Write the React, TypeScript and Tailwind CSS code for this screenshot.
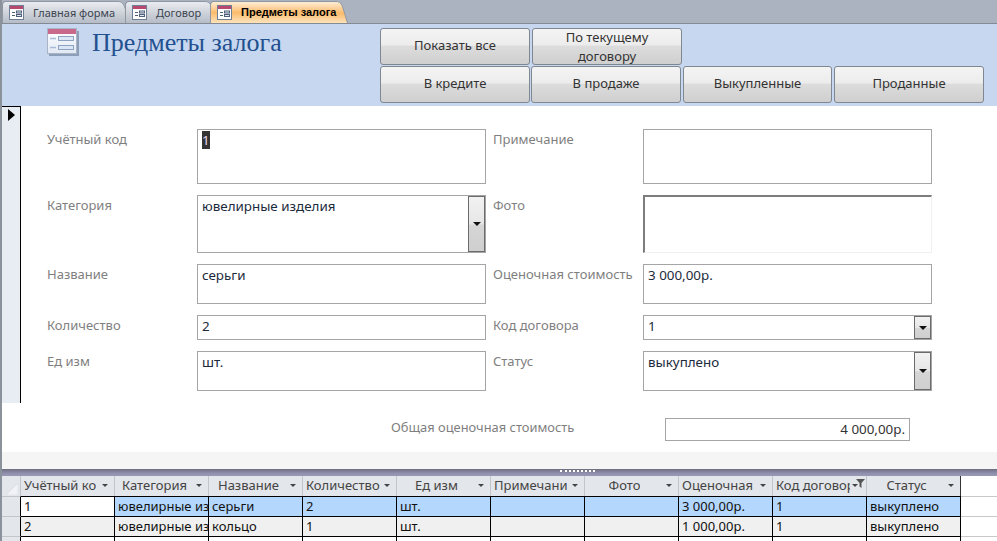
import React from "react";

const FormIcon = () => (
  <svg width="15" height="15" viewBox="0 0 15 15" className="shrink-0">
    <rect x="0.5" y="0.5" width="14" height="14" fill="#fff" stroke="#6f7f95" />
    <rect x="1" y="1" width="13" height="3" fill="#b8486e" />
    <path d="M3 7.5h3M3 10.5h3" stroke="#4f6078" />
    <rect x="7.5" y="6" width="5" height="2" fill="#dfe8f5" stroke="#4f6078" />
    <rect x="7.5" y="9.5" width="5" height="2" fill="#dfe8f5" stroke="#4f6078" />
  </svg>
);

const BigIcon = () => (
  <svg width="32" height="28" viewBox="0 0 32 28" className="shrink-0">
    <defs>
      <linearGradient id="bigbody" x1="0" y1="0" x2="0" y2="1">
        <stop offset="0" stopColor="#ffffff" />
        <stop offset="1" stopColor="#e2e9f4" />
      </linearGradient>
    </defs>
    <rect x="2" y="3" width="30" height="25" fill="#6f7f99" opacity="0.65" />
    <rect x="0.5" y="0.5" width="29" height="25" fill="url(#bigbody)" stroke="#a9b4c6" />
    <rect x="1" y="1" width="28" height="5" fill="#c8688a" />
    <path d="M3 10.5h6M3 19.5h6" stroke="#a8bcd8" strokeWidth="1.5" />
    <rect x="11.5" y="8.5" width="15" height="4" fill="#dce7f6" stroke="#8ea3c2" />
    <rect x="11.5" y="17.5" width="15" height="4" fill="#dce7f6" stroke="#8ea3c2" />
  </svg>
);

const TabTail = ({ active, id }: { active?: boolean; id: string }) => (
  <svg width="14" height="22" viewBox="0 0 14 22" className="shrink-0 -ml-px">
    <defs>
      <linearGradient id={id} x1="0" y1="0" x2="0" y2="1">
        {active ? (
          <>
            <stop offset="0" stopColor="#fdeed6" />
            <stop offset="0.55" stopColor="#fbbb6c" />
            <stop offset="1" stopColor="#fde3bb" />
          </>
        ) : (
          <>
            <stop offset="0" stopColor="#e9ecf0" />
            <stop offset="1" stopColor="#b6bcc6" />
          </>
        )}
      </linearGradient>
    </defs>
    <path d="M0 0.5H2C6 0.5 7.5 3 9 7L13.5 22H0z" fill={`url(#${id})`} />
    <path d="M0 0.5H2C6 0.5 7.5 3 9 7L13.5 22" fill="none" stroke="#8f97a3" />
  </svg>
);

const Tab = ({
  label,
  active,
  w,
  id,
  cls,
}: {
  label: string;
  active?: boolean;
  w: string;
  id: string;
  cls?: string;
}) => (
  <div className={`flex relative ${cls ?? ""}`}>
    <div
      className={`${w} ${
        active
          ? "bg-gradient-to-b from-[#fdeed6] via-[#fbbb6c] to-[#fde3bb] font-bold text-[11px] text-black font-['Liberation_Sans']"
          : "bg-gradient-to-b from-[#e9ecf0] to-[#b6bcc6] text-[11px] text-[#3c4450]"
      } h-[22px] flex items-center gap-[9px] pl-[6px] rounded-tl-[4px] border-l border-t border-[#8f97a3] leading-none`}
    >
      <FormIcon />
      <span className="relative z-10 whitespace-nowrap">{label}</span>
    </div>
    <TabTail active={active} id={id} />
  </div>
);

const Btn = ({ children, w }: { children: React.ReactNode; w: string }) => (
  <div
    className={`${w} h-[37px] rounded-[3px] border border-[#7f8790] overflow-hidden flex items-center justify-center text-center text-[13px] leading-[19px] text-[#333] pb-[3px] bg-[linear-gradient(#f4f4f4_0%,#ececec_45%,#dcdcdc_50%,#cfcfcf_100%)]`}
  >
    {children}
  </div>
);

const Label = ({ children }: { children: React.ReactNode }) => (
  <div className="pt-[1px] text-[13px] leading-[18px] text-[#7f7f7f] whitespace-nowrap">{children}</div>
);

const Arrow = () => (
  <svg width="8" height="4" viewBox="0 0 8 4">
    <path d="M0 0h8L4 4z" fill="#111" />
  </svg>
);

const Field = ({
  children,
  combo,
  sel,
}: {
  children?: React.ReactNode;
  combo?: boolean;
  sel?: boolean;
}) => (
  <div className="relative h-full border border-[#a5a5a5] bg-white pl-[4px] pt-[1px] text-[13.4px] leading-[18px] text-[#1b2a3c]">
    {sel ? <span className="inline-block bg-[#333] text-[#e8d8f0] h-[18px]">{children}</span> : children}
    {combo && (
      <div className="absolute right-0 top-0 bottom-0 w-[17px] border border-[#6b6b6b] bg-[linear-gradient(#f2f2f2_0%,#e6e6e6_50%,#d6d6d6_52%,#cfcfcf_100%)] flex items-center justify-center">
        <Arrow />
      </div>
    )}
  </div>
);

const columns = [
  "Учётный ко",
  "Категория",
  "Название",
  "Количество",
  "Ед изм",
  "Примечани",
  "Фото",
  "Оценочная",
  "Код договор",
  "Статус",
];

const rows = [
  ["1", "ювелирные изделия", "серьги", "2", "шт.", "", "", "3 000,00р.", "1", "выкуплено"],
  ["2", "ювелирные изделия", "кольцо", "1", "шт.", "", "", "1 000,00р.", "1", "выкуплено"],
];

export default function App() {
  return (
    <div
      className="w-[997px] h-[541px] overflow-hidden flex flex-col bg-white border-l-2 border-[#8c929c]"
      style={{ fontFamily: '"Noto Sans", "Open Sans", sans-serif' }}
    >
      <div className="h-[24px] shrink-0 bg-[#abb3c0] border-b border-[#848a93] flex items-end pt-[1px]">
        <Tab label="Главная форма" w="w-[115px]" id="t1" />
        <Tab label="Договор" w="w-[79px]" id="t2" cls="-ml-[5px]" />
        <Tab label="Предметы залога" active w="w-[125px]" id="t3" cls="-ml-[7px]" />
      </div>

      <div className="h-[82px] shrink-0 bg-[#c6d7ef] flex">
        <div className="w-[378px] shrink-0 pl-[45px] pt-[4px] flex items-start gap-[13px]">
          <BigIcon />
          <div
            className="text-[26px] leading-[30px] text-[#23508f]"
            style={{ fontFamily: '"Liberation Serif", serif' }}
          >
            Предметы залога
          </div>
        </div>
        <div className="pt-[4px] flex flex-col gap-[1px]">
          <div className="flex gap-[2px]">
            <Btn w="w-[150px]">Показать все</Btn>
            <Btn w="w-[150px]">
              <div className="h-[35px]">
                По текущему
                <br />
                договору
              </div>
            </Btn>
          </div>
          <div className="flex">
            <Btn w="w-[150px]">В кредите</Btn>
            <div className="w-[1px]" />
            <Btn w="w-[150px]">В продаже</Btn>
            <div className="w-[2px]" />
            <Btn w="w-[149px]">Выкупленные</Btn>
            <div className="w-[2px]" />
            <Btn w="w-[150px]">Проданные</Btn>
          </div>
        </div>
      </div>

      <div className="h-[297px] shrink-0 flex">
        <div className="w-[19px] shrink-0 bg-[#e8ecf3] border-r border-t border-black pl-[6px] pt-[2px]">
          <svg width="7" height="12" viewBox="0 0 7 12">
            <path d="M0 0l7 6-7 6z" fill="#000" />
          </svg>
        </div>
        <div className="pl-[26px] pt-[23px] grid grid-cols-[150px_289px_157px_289px] grid-rows-[55px_58px_40px_25px_40px] gap-y-[11px] gap-x-0">
          <Label>Учётный код</Label>
          <Field sel>1</Field>
          <div className="pl-[7px]"><Label>Примечание</Label></div>
          <Field />

          <Label>Категория</Label>
          <Field combo>ювелирные изделия</Field>
          <div className="pl-[7px]"><Label>Фото</Label></div>
          <div className="border-t-2 border-l-2 border-r border-b border-t-[#7d7d7d] border-l-[#7d7d7d] border-r-[#f0f0f0] border-b-[#f0f0f0] h-full" />

          <Label>Название</Label>
          <Field>серьги</Field>
          <div className="pl-[7px]"><Label>Оценочная стоимость</Label></div>
          <Field>3 000,00р.</Field>

          <Label>Количество</Label>
          <Field>2</Field>
          <div className="pl-[7px]"><Label>Код договора</Label></div>
          <Field combo>1</Field>

          <Label>Ед изм</Label>
          <Field>шт.</Field>
          <div className="pl-[7px]"><Label>Статус</Label></div>
          <Field combo>выкуплено</Field>
        </div>
      </div>

      <div className="h-[49px] shrink-0 flex items-start pt-[15px] pl-[389px]">
        <div className="w-[274px] text-[12.9px] leading-[18px] text-[#7f7f7f]">Общая оценочная стоимость</div>
        <div className="w-[245px] h-[23px] border border-[#a5a5a5] text-right pr-[4px] text-[13.4px] leading-[21px] text-[#333]">
          4 000,00р.
        </div>
      </div>

      <div className="h-[17px] shrink-0 bg-[#f5f5f5]" />

      <div className="h-[7px] shrink-0 bg-[linear-gradient(#6e6e80,#8f8fae_60%,#9a9ab4)] flex pl-[558px]">
        <div className="mt-[1px] w-[35px] h-[2px] border-t-2 border-dotted border-white" />
      </div>

      <div className="flex-1 flex flex-col text-[13px] leading-[18px] text-[#111]">
        <div className="h-[20px] flex shrink-0">
          <div className="w-[19px] bg-[#e3e6ea] border-r border-[#c2c6cb] flex items-end justify-center pb-[1px]">
            <svg width="13" height="13" viewBox="0 0 13 13"><path d="M13 1L1 13h12z" fill="#f1f3f6" stroke="#d0d4da" strokeWidth="0.5" /></svg>
          </div>
          {columns.map((c, i) => (
            <div
              key={c}
              className={`relative w-[94px] pb-[2px] bg-[#e3e6ea] border-r flex items-center overflow-hidden text-[#444] ${
                i === 9 ? "border-[#333]" : "border-[#c2c6cb]"
              } ${[1, 2, 4, 6, 9].includes(i) ? "justify-center pr-[14px]" : "pl-[3px]"}`}
            >
              <span className={`whitespace-nowrap overflow-hidden ${i === 8 ? "w-[74px]" : ""}`}>{c}</span>
              <span className={`absolute top-[8px] flex ${i === 8 ? "right-[8px]" : "right-[6px]"}`}>
                <svg width="6" height="3" viewBox="0 0 6 3"><path d="M0 0h6L3 3z" fill="#444" /></svg>
              </span>
              {i === 8 && (
                <svg width="9" height="9" viewBox="0 0 9 9" className="absolute right-[1px] top-[3px]">
                  <path d="M0 0h9L5.5 4v5L3.5 7.5V4z" fill="#555" />
                </svg>
              )}
            </div>
          ))}
        </div>
        {rows.map((r, ri) => (
          <div key={ri} className="h-[20px] flex shrink-0">
            <div className="w-[19px] bg-[#e3e6ea] border-t border-r border-t-[#c2c6cb] border-r-black" />
            {r.map((c, i) => (
              <div
                key={i}
                className={`w-[94px] border-t border-r border-black pl-[3px] overflow-hidden whitespace-nowrap ${
                  ri === 0 ? (i === 0 ? "bg-white" : "bg-[#b3d7fd]") : "bg-[#f0f0f0]"
                }`}
              >
                {c}
              </div>
            ))}
            <div className="flex-1 border-t border-[#c8c8c8]" />
          </div>
        ))}
        <div className="h-[6px] flex shrink-0">
          <div className="w-[19px] bg-[#e3e6ea] border-t border-r border-t-[#c2c6cb] border-r-black" />
          {columns.map((c) => (
            <div key={c} className="w-[94px] border-t border-r border-black" />
          ))}
          <div className="flex-1 border-t border-[#c8c8c8]" />
        </div>
      </div>
    </div>
  );
}
